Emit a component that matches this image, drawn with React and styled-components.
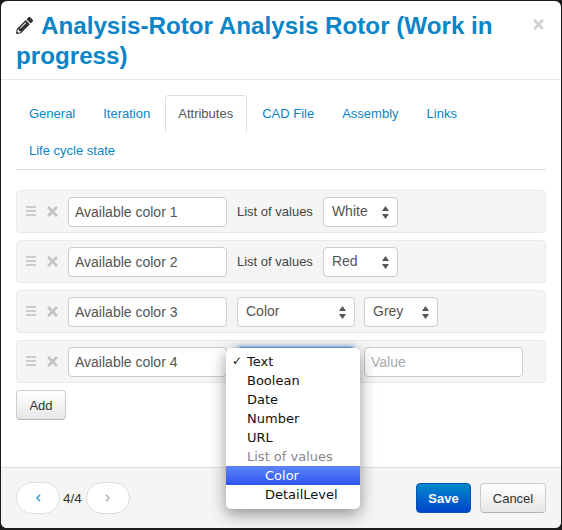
import styled, { createGlobalStyle } from "styled-components";
import { FaPencilAlt, FaTimes } from "react-icons/fa";

const Global = createGlobalStyle`
  html, body {
    margin: 0;
    padding: 0;
    background: #1c1c1c;
  }
  body {
    font-family: "Liberation Sans", Arial, sans-serif;
    color: #333;
  }
`;

const Modal = styled.div`
  width: 560px;
  height: 527px;
  margin: 1px 0 0 1px;
  background: #fff;
  border-radius: 6px;
  display: flex;
  flex-direction: column;
  overflow: hidden;
`;

const Header = styled.header`
  height: 79px;
  box-sizing: border-box;
  padding: 10px 15px 0;
  border-bottom: 1px solid #e8e8e8;
  display: flex;
  justify-content: space-between;
`;

const Title = styled.h3`
  margin: 0;
  width: 490px;
  font-size: 24.2px;
  line-height: 30px;
  font-weight: 700;
  color: #0a85c8;
  svg {
    color: #333;
    font-size: 17px;
    margin-right: 8px;
  }
`;

const Close = styled.span`
  color: #d2d2d2;
  font-size: 15px;
  margin: 6px 0 0 0;
`;

const Body = styled.main`
  flex: 1;
  padding: 15px 15px 0;
  position: relative;
`;

const Tabs = styled.nav`
  display: flex;
  flex-wrap: wrap;
  height: 74px;
  padding-right: 30px;
  border-bottom: 1px solid #ddd;
  margin-bottom: 20px;
`;

const Tab = styled.a`
  height: 37px;
  box-sizing: border-box;
  padding: 0 ${(p) => (p.$active ? 13 : 12)}px 2px 12px;
  margin-right: 2px;
  display: flex;
  align-items: center;
  font-size: 13px;
  color: ${(p) => (p.$active ? "#555" : "#0a85c8")};
  border: 1px solid ${(p) => (p.$active ? "#ddd" : "transparent")};
  border-bottom: 0;
  border-radius: 4px 4px 0 0;
`;

const Row = styled.div`
  width: 530px;
  height: 43px;
  box-sizing: border-box;
  margin-bottom: 7px;
  padding: 6px 0 0 8px;
  display: flex;
  align-items: flex-start;
  background: #f5f5f5;
  border: 1px solid #e9e9e9;
  border-radius: 4px;
`;

const Handle = styled.svg`
  width: 12px;
  height: 10px;
  margin: 9px 10px 0 0;
  fill: #ccc;
`;

const Remove = styled.span`
  width: 11px;
  height: 15px;
  margin: 7px 10px 0 0;
  font-size: 15px;
  line-height: 15px;
  color: #c4c4c4;
  svg {
    margin-left: -2px;
  }
`;

const fieldBase = `
  height: 30px;
  box-sizing: border-box;
  background: #fff;
  border: 1px solid #ccc;
  border-radius: 4px;
  font-family: "Liberation Sans", Arial, sans-serif;
  font-size: 14px;
  color: #555;
`;

const Input = styled.input`
  ${fieldBase}
  width: ${(p) => p.$width}px;
  margin-right: ${(p) => p.$gap}px;
  padding: 0 6px;
  outline: none;
  &::placeholder {
    color: #aaa;
  }
`;

const Label = styled.span`
  font-size: 13px;
  line-height: 29px;
  color: #444;
  margin-right: 10px;
`;

const Select = styled.div`
  ${fieldBase}
  width: ${(p) => p.$width}px;
  margin-right: ${(p) => p.$gap}px;
  padding: 0 8px 2px 8px;
  display: flex;
  align-items: center;
  justify-content: space-between;
  ${(p) => p.$focused && "border-color: #5b9bd8; box-shadow: 0 0 5px rgba(60, 140, 225, 0.9);"}
`;

const Arrows = styled.svg`
  width: 7px;
  height: 13px;
  margin-top: 2px;
  fill: #555;
`;

const AddButton = styled.button`
  display: block;
  width: 50px;
  height: 30px;
  padding: 0;
  font: 13px "Liberation Sans", Arial, sans-serif;
  color: #333;
  background: linear-gradient(#fff, #e6e6e6);
  border: 1px solid #ccc;
  border-bottom-color: #b3b3b3;
  border-radius: 4px;
`;

const Menu = styled.ul`
  position: absolute;
  left: 225px;
  top: 268px;
  width: 134px;
  margin: 0;
  padding: 4px 0 5px;
  list-style: none;
  background: #fff;
  border-radius: 5px;
  box-shadow: 0 5px 16px rgba(0, 0, 0, 0.42);
  font-family: "DejaVu Sans", sans-serif;
  font-size: 13px;
`;

const MenuItem = styled.li`
  height: 19px;
  line-height: 19px;
  padding-left: ${(p) => (p.$nested ? 39 : 21)}px;
  position: relative;
  color: ${(p) => (p.$selected ? "#fff" : p.$disabled ? "#8a8588" : "#111")};
  background: ${(p) => (p.$selected ? "linear-gradient(#5f83f6, #2a56f0)" : "transparent")};
`;

const Check = styled.span`
  position: absolute;
  left: 6px;
  top: 0;
  font-size: 12px;
`;

const Footer = styled.footer`
  height: 61px;
  box-sizing: border-box;
  padding: 0 15px;
  background: #f5f5f5;
  border-top: 1px solid #ddd;
  display: flex;
  align-items: center;
`;

const Pager = styled.div`
  display: flex;
  align-items: center;
  flex: 1;
  font-size: 13.5px;
  color: #333;
`;

const PageButton = styled.span`
  width: 44px;
  height: 32px;
  box-sizing: border-box;
  display: flex;
  align-items: center;
  justify-content: center;
  background: #fff;
  border: 1px solid #ddd;
  border-radius: 16px;
  margin: 0 ${(p) => p.$right || 0}px 0 ${(p) => p.$left || 0}px;
  svg {
    width: 5px;
    height: 8px;
    fill: none;
    stroke: ${(p) => (p.$disabled ? "#aaa" : "#2a9ad8")};
    stroke-width: 1.6;
  }
`;

const Save = styled.button`
  width: 55px;
  height: 30px;
  padding: 0;
  margin-right: 9px;
  font: 700 13px "Liberation Sans", Arial, sans-serif;
  color: #fff;
  background: linear-gradient(#0088cc, #0044cc);
  border: 1px solid #0552b5;
  border-radius: 4px;
`;

const Cancel = styled.button`
  width: 66px;
  height: 30px;
  padding: 0;
  font: 13px "Liberation Sans", Arial, sans-serif;
  color: #333;
  background: linear-gradient(#fff, #e6e6e6);
  border: 1px solid #ccc;
  border-bottom-color: #b3b3b3;
  border-radius: 4px;
`;

const tabs = ["General", "Iteration", "Attributes", "CAD File", "Assembly", "Links", "Life cycle state"];
const options = ["Boolean", "Date", "Number", "URL"];

const SelectField = ({ value, width, gap = 10, focused }) => (
  <Select $width={width} $gap={gap} $focused={focused}>
    {value}
    <Arrows viewBox="0 0 7 13">
      <path d="M3.5 0 7 5H0zM3.5 13 0 8h7z" />
    </Arrows>
  </Select>
);

const AttributeRow = ({ name, children }) => (
  <Row>
    <Handle viewBox="0 0 12 10">
      <path d="M1 0h10v2H1zM1 4h10v2H1zM1 8h10v2H1z" />
    </Handle>
    <Remove>
      <FaTimes />
    </Remove>
    <Input $width={159} $gap={10} defaultValue={name} />
    {children}
  </Row>
);

export default function App() {
  return (
    <>
      <Global />
      <Modal>
        <Header>
          <Title>
            <FaPencilAlt />
            Analysis-Rotor Analysis Rotor (Work in progress)
          </Title>
          <Close>
            <FaTimes />
          </Close>
        </Header>
        <Body>
          <Tabs>
            {tabs.map((t) => (
              <Tab key={t} $active={t === "Attributes"}>
                {t}
              </Tab>
            ))}
          </Tabs>
          <AttributeRow name="Available color 1">
            <Label>List of values</Label>
            <SelectField value="White" width={75} />
          </AttributeRow>
          <AttributeRow name="Available color 2">
            <Label>List of values</Label>
            <SelectField value="Red" width={75} />
          </AttributeRow>
          <AttributeRow name="Available color 3">
            <SelectField value="Color" width={118} gap={9} />
            <SelectField value="Grey" width={74} />
          </AttributeRow>
          <AttributeRow name="Available color 4">
            <SelectField value="" width={118} gap={9} focused />
            <Input $width={159} $gap={0} placeholder="Value" />
          </AttributeRow>
          <AddButton>Add</AddButton>
          <Menu>
            <MenuItem>
              <Check>✓</Check>Text
            </MenuItem>
            {options.map((o) => (
              <MenuItem key={o}>{o}</MenuItem>
            ))}
            <MenuItem $disabled>List of values</MenuItem>
            <MenuItem $nested $selected>
              Color
            </MenuItem>
            <MenuItem $nested>DetailLevel</MenuItem>
          </Menu>
        </Body>
        <Footer>
          <Pager>
            <PageButton $right={3}>
              <svg viewBox="0 0 6 10">
                <path d="M5 1 1 5l4 4" />
              </svg>
            </PageButton>
            4/4
            <PageButton $left={4} $disabled>
              <svg viewBox="0 0 6 10">
                <path d="m1 1 4 4-4 4" />
              </svg>
            </PageButton>
          </Pager>
          <Save>Save</Save>
          <Cancel>Cancel</Cancel>
        </Footer>
      </Modal>
    </>
  );
}
